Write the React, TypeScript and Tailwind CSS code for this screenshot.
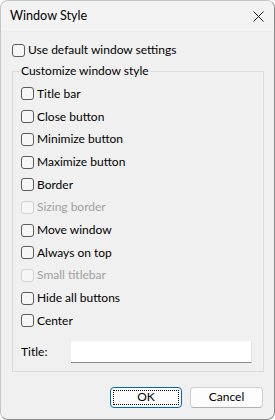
import React from "react";

const font = { fontFamily: 'Lato, "Noto Sans", sans-serif' };

function Box({ disabled }: { disabled?: boolean }) {
  return (
    <span
      className={`inline-block w-[13px] h-[13px] rounded-[3px] border bg-[#f6f6f6] shrink-0 ${
        disabled ? "border-[#d2d2d2]" : "border-[#5c5c5c]"
      }`}
    />
  );
}

function Check({ label, disabled }: { label: string; disabled?: boolean }) {
  return (
    <div className="flex items-center h-[22.7px] gap-[3px]">
      <Box disabled={disabled} />
      <span className={disabled ? "text-[#a0a0a0]" : "text-black"}>{label}</span>
    </div>
  );
}

const items: [string, boolean?][] = [
  ["Title bar"],
  ["Close button"],
  ["Minimize button"],
  ["Maximize button"],
  ["Border"],
  ["Sizing border", true],
  ["Move window"],
  ["Always on top"],
  ["Small titlebar", true],
  ["Hide all buttons"],
  ["Center"],
];

export default function App() {
  return (
    <div
      className="w-[275px] h-[420px] bg-[#f0f0f0] rounded-[8px] border border-[#c4c4c4] border-r-[#8a8a8a] border-b-[#8a8a8a] overflow-hidden flex flex-col text-[12px] text-black"
      style={font}
    >
      {/* title bar */}
      <div className="h-[30px] bg-[#f3f3f3] flex items-center justify-between pl-[9px] pr-[10px] shrink-0">
        <span className="text-[12.6px]">Window Style</span>
        <svg width="11" height="11" viewBox="0 0 11 11" className="stroke-[#222]">
          <path d="M0.5 0.5 L10.5 10.5 M10.5 0.5 L0.5 10.5" strokeWidth="1" />
        </svg>
      </div>

      <div className="flex flex-col pl-[11px] pr-[10px] pt-[8px]">
        <div className="flex items-center h-[22px] gap-[3px]">
          <Box />
          <span>Use default window settings</span>
        </div>

        {/* group box */}
        <fieldset className="mt-[3px] border border-[#dcdcdc] px-[8px] pb-[8px] pt-0 mx-0">
          <legend className="px-[1px] -ml-[1px] leading-[14px]">Customize window style</legend>
          <div className="flex flex-col pt-[4.6px]">
            {items.map(([l, d]) => (
              <Check key={l} label={l} disabled={d} />
            ))}
          </div>
          <div className="flex items-center mt-[8.6px] h-[22px]">
            <span className="w-[50px]">Title:</span>
            <div className="flex-1 h-[22px] bg-white border-b border-[#8a8a8a] border-r border-r-[#e4e4e4] mr-[3px]" />
          </div>
        </fieldset>

        {/* buttons */}
        <div className="flex justify-end gap-[8px] mt-[15px] pr-[1px]">
          <button className="w-[72px] h-[21px] rounded-[4px] border border-[#0067c0] bg-[#fdfdfd] p-[2px]">
            <div className="w-full h-full border border-dotted border-black flex items-center justify-center leading-none">
              OK
            </div>
          </button>
          <button className="w-[73px] h-[21px] rounded-[4px] border border-[#d0d0d0] border-b-[#b0b0b0] bg-[#fdfdfd] flex items-center justify-center leading-none">
            Cancel
          </button>
        </div>
      </div>
    </div>
  );
}
